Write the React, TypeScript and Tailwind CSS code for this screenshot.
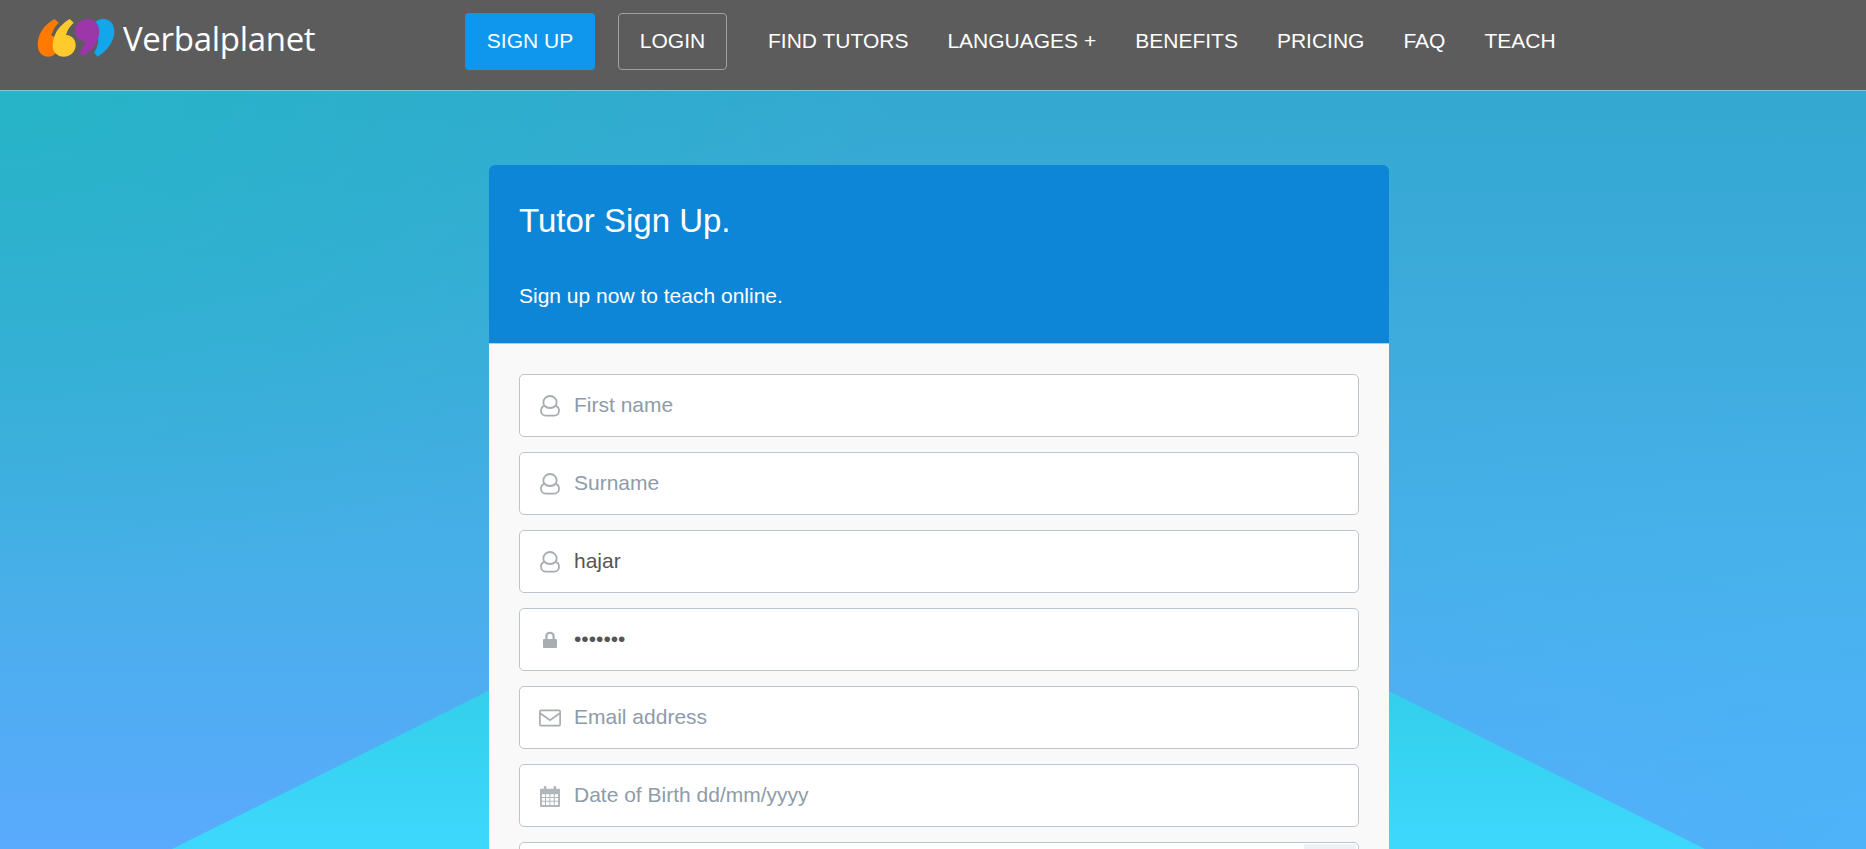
import React from "react";

const iconCls = "w-[22px] h-[22px] shrink-0";

function UserIcon() {
  return (
    <svg viewBox="0 0 22 22" className={iconCls} fill="none" stroke="#a7adb1" strokeWidth="1.800">
      <path d="M11 1c-3.800 0-6.600 2.700-6.600 6.400 0 1.400.4 2.500 1 3.400C3.300 11.500 2 13.300 2 15.500c0 3 1.800 5.200 4.600 5.200h8.800c2.800 0 4.600-2.200 4.600-5.200 0-2.200-1.300-4-3.400-4.700.6-.9 1-2 1-3.400C17.600 3.700 14.800 1 11 1Z" />
      <path d="M5.600 11c1.400 1.300 3.200 2 5.400 2s4-.7 5.400-2" />
    </svg>
  );
}

function LockIcon() {
  return (
    <svg viewBox="0 0 22 22" className={iconCls} fill="#a7adb1">
      <path d="M6.300 10V7.300C6.300 4.500 8.200 2.800 11 2.800s4.700 1.700 4.700 4.500V10h1.100c.6 0 1.200.5 1.200 1.100v6.800c0 .6-.6 1.100-1.200 1.100H5.200C4.600 19 4 18.500 4 17.900v-6.800C4 10.500 4.600 10 5.200 10h1.100Zm2.200 0h5V7.400c0-1.600-1-2.600-2.500-2.600s-2.500 1-2.500 2.600V10Z" />
    </svg>
  );
}

function MailIcon() {
  return (
    <svg viewBox="0 0 22 22" className={iconCls} fill="none" stroke="#a7adb1" strokeWidth="1.700">
      <rect x="0.900" y="3.300" width="20.200" height="15.400" rx="1.200" />
      <path d="M1.200 6.200 11 13.200l9.800-7" />
    </svg>
  );
}

function CalendarIcon() {
  return (
    <svg viewBox="0 0 22 22" className={iconCls}>
      <path
        fill="#b0b6ba"
        fillRule="evenodd"
        d="M2 3.800h2.800V2.400C4.800 1.500 5.400 1 6.100 1s1.300.5 1.300 1.400v1.400h7.200V2.400c0-.9.600-1.400 1.300-1.400s1.300.5 1.300 1.400v1.400H20c.6 0 1 .4 1 1V21c0 .6-.4 1-1 1H2c-.6 0-1-.4-1-1V4.800c0-.6.400-1 1-1Zm1 5.400v2.700h3V9.200H3Zm4 0v2.700h3.400V9.200H7Zm4.400 0v2.700h3.400V9.200h-3.400Zm4.400 0v2.700H19V9.200h-3.200ZM3 12.900v2.800h3v-2.800H3Zm4 0v2.800h3.400v-2.800H7Zm4.400 0v2.800h3.400v-2.800h-3.400Zm4.400 0v2.800H19v-2.800h-3.200ZM3 16.700V20h3v-3.300H3Zm4 0V20h3.400v-3.300H7Zm4.400 0V20h3.400v-3.300h-3.400Zm4.400 0V20H19v-3.300h-3.200Z"
      />
    </svg>
  );
}

function Logo() {
  return (
    <svg viewBox="0 0 300 180" className="w-[100px] h-[60px] shrink-0 -mt-[3px]">
      <path fill="#ff7a00" d="M74 27C42 44 23 72 23 105c0 23 15 35 32 35 17 0 30-15 30-32 0-18-13-30-21-32 4-14 12-28 22-38Z" />
      <path fill="#ffca2b" d="M119 27C86 46 68 76 68 108c0 20 16 32 33 32 21 0 36-16 36-35 0-17-13-30-29-30 4-15 12-27 23-37Z" />
      <path fill="#14a6ea" d="M220 27c-15 0-27 8-28 18l13 50c-3 12-6 24-13 33l11 12c32-20 50-50 50-75 0-23-13-38-33-38Z" />
      <path fill="#9c37aa" d="M175 27c-22 0-40 15-40 35 0 19 15 31 30 31-3 13-9 25-17 35l11 10c33-18 49-48 49-73 0-23-13-38-33-38Z" />
    </svg>
  );
}

function Field({
  icon,
  placeholder,
  value,
  type = "text",
  extra,
}: {
  icon: React.ReactNode;
  placeholder?: string;
  value?: string;
  type?: string;
  extra?: boolean;
}) {
  return (
    <div className="flex items-center h-[63px] bg-white border border-[#bdc4cb] rounded-[5px] pl-[19px] gap-[13px] overflow-hidden shrink-0">
      {icon}
      {extra ? (
        <div className="ml-auto self-stretch w-[52px] mr-[2px] mt-[1px] bg-[#f0f1f6]" />
      ) : (
        <input
          type={type}
          readOnly
          placeholder={placeholder}
          defaultValue={value}
          className="flex-1 min-w-0 -mt-[1px] bg-transparent outline-none text-[21px] text-[#555555] placeholder:text-[#8e9baa] font-['Liberation_Sans',sans-serif]"
        />
      )}
    </div>
  );
}

const links = [
  { label: "FIND TUTORS", cls: "ml-[41px]" },
  { label: "LANGUAGES +", cls: "ml-[39px]" },
  { label: "BENEFITS", cls: "ml-[39px]" },
  { label: "PRICING", cls: "ml-[39px]" },
  { label: "FAQ", cls: "ml-[39px]" },
  { label: "TEACH", cls: "ml-[39px]" },
];

export default function App() {
  return (
    <div className="relative h-screen overflow-hidden font-['Liberation_Sans',Arial,sans-serif] text-white bg-[radial-gradient(ellipse_900px_500px_at_0px_90px,rgba(34,184,196,0.75),rgba(34,184,196,0)),radial-gradient(ellipse_900px_500px_at_1866px_849px,rgba(70,185,245,0.6),rgba(70,185,245,0)),linear-gradient(180deg,#34a8d1_90px,#47afe8_560px,#5aaafd_849px)]">
      <div className="absolute inset-0 [clip-path:polygon(938.5px_466px,1705px_849px,172px_849px)] bg-[linear-gradient(180deg,#2ac4dc_466px,#33cfeb_691px,#3dd8fc_849px)]" />

      <header className="relative flex items-start pt-[13px] h-[91px] bg-[#5c5c5c] border-b border-b-[#7fc8dc]">
        <div className="flex items-center w-[465px] pl-[30px] h-[57px]">
          <Logo />
          <span className="-ml-[7px] -mt-[6px] text-[33px] tracking-[-0.3px] font-['Open_Sans',sans-serif] text-white leading-none">Verbalplanet</span>
        </div>
        <a className="flex items-center justify-center w-[130px] h-[57px] pb-[2px] rounded-[4px] bg-[#0f96ed] text-[21px]">SIGN UP</a>
        <a className="ml-[23px] flex items-center justify-center w-[109px] h-[57px] pb-[2px] rounded-[4px] border border-[#a0a0a0] text-[21px]">LOGIN</a>
        {links.map((l) => (
          <a key={l.label} className={`${l.cls} h-[57px] flex items-center -mt-[1px] text-[21px] whitespace-nowrap`}>
            {l.label}
          </a>
        ))}
      </header>

      <main className="relative w-[900px] ml-[489px] mt-[74px] rounded-t-[6px] overflow-hidden">
        <div className="h-[179px] bg-[#0e86d8] border-b border-b-[#c4c8cc] px-[30px] flex flex-col">
          <h1 className="h-[98px] pt-[36px] text-[33px] leading-[40px] border-b border-b-[#0b84df]">Tutor Sign Up.</h1>
          <p className="mt-[21px] text-[21px] leading-[24px]">Sign up now to teach online.</p>
        </div>
        <div className="bg-[#f9f9f9] px-[30px] pt-[30px] pb-[30px] flex flex-col gap-[15px]">
          <Field icon={<UserIcon />} placeholder="First name" />
          <Field icon={<UserIcon />} placeholder="Surname" />
          <Field icon={<UserIcon />} value="hajar" />
          <Field icon={<LockIcon />} type="password" value="1234567" />
          <Field icon={<MailIcon />} placeholder="Email address" />
          <Field icon={<CalendarIcon />} placeholder="Date of Birth dd/mm/yyyy" />
          <Field icon={null} extra />
        </div>
      </main>
    </div>
  );
}
